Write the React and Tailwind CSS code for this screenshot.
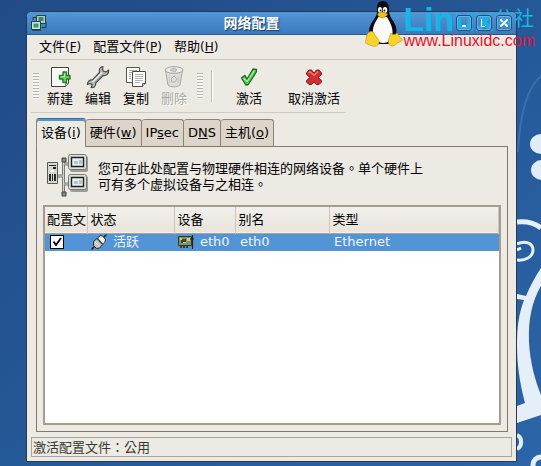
import React, { useState } from 'react';

const menus = [
  { label: '文件', key: 'F' },
  { label: '配置文件', key: 'P' },
  { label: '帮助', key: 'H' },
];

const tabs = [
  { id: 'devices', before: '设备(', key: 'i', after: ')' },
  { id: 'hardware', before: '硬件(', key: 'w', after: ')' },
  { id: 'ipsec', before: 'IP', key: 's', after: 'ec' },
  { id: 'dns', before: 'D', key: 'N', after: 'S' },
  { id: 'hosts', before: '主机(', key: 'o', after: ')' },
];

function NewIcon() {
  return (
    <svg className="w-6 h-6" viewBox="0 0 24 24">
      <path d="M3.500 2.500h17v16l-3 3h-14z" fill="#fff" stroke="#41423e" />
      <path d="M5 4h14v14H5z" fill="#f7f8f4" />
      <path d="M20.500 18.500h-3v3z" fill="#d7d8d2" stroke="#555" strokeWidth=".7" />
      <path d="M15 7h3.500v3.500H22V14h-3.500v3.500H15V14h-3.500v-3.500H15z" fill="#70cf69" stroke="#257d26" strokeLinejoin="round" strokeWidth="1.400" />
      <path d="M16.500 8.500v3H13" fill="none" stroke="#b3efaa" strokeWidth="1" />
    </svg>
  );
}

function WrenchIcon() {
  return (
    <svg className="w-6 h-6" viewBox="0 0 24 24">
      <path d="M17 1.500c-3 .5-4.300 3-3.500 6L6.500 15C4 14.500 1.300 16.500 1.500 19.500l3-1 1.800 1.500-1.300 2.500c3 .5 5-1.500 4.700-4.500l7.500-7.500c3 .5 5.800-1.700 5.500-5.500l-3 2-2.500-1-.7-2z" fill="#b7b9b5" stroke="#484a46" strokeLinejoin="round" strokeWidth="1.200" />
      <path d="M6.500 17L16 7.500" stroke="#f0f0ee" strokeWidth="1.500" />
      <path d="M8.500 18l8.500-8.500" stroke="#868984" />
    </svg>
  );
}

function CopyIcon() {
  return (
    <svg className="w-6 h-6" viewBox="0 0 24 24">
      <path d="M2.500 2.500h13v15h-13z" fill="#fdfdfc" stroke="#55574f" />
      <path d="M5 5.500h8M5 7.500h3M5 9.500h2M5 11.500h2M5 13.500h2" stroke="#a9aba6" />
      <path d="M8.500 6.500h13v12l-3 3h-10z" fill="#fff" stroke="#484a44" />
      <path d="M11 9.500h8M11 11.500h8M11 13.500h8M11 15.500h8M11 17.500h5" stroke="#b3b5b0" />
      <path d="M21.500 18.500h-3v3" fill="#ddd" stroke="#55574f" />
    </svg>
  );
}

function TrashIcon() {
  return (
    <svg className="w-6 h-6" viewBox="0 0 24 24">
      <path d="M3.500 5l2.500 15c2 2.500 10 2.500 12 0l2.500-15z" fill="#dedcd7" stroke="#aaa8a4" />
      <ellipse cx="12" cy="5" rx="9" ry="3.300" fill="#eeece8" stroke="#a5a39f" />
      <path d="M8 5l4-2 3 2-2 2z" fill="#d0ceca" stroke="#b6b4b0" />
      <path d="M9 14l3-3 3 3-2 3h-3z" fill="none" stroke="#b3b1ad" />
      <path d="M7 11l1 7M17 11l-1 7" stroke="#cbc9c5" />
    </svg>
  );
}

function CheckIcon() {
  return (
    <svg className="w-6 h-6" viewBox="0 0 24 24">
      <path d="M4.500 13l3.200-2.500 2.500 3.500L16 4l3.500.5-.2 2.500-8 12.500-2.500.5z" fill="#55c853" stroke="#1f6a1e" strokeLinejoin="round" strokeWidth="1.300" />
      <path d="M6.500 13l3.500 3.500L17.500 5.500" fill="none" stroke="#a6ee9f" strokeWidth="1.300" />
    </svg>
  );
}

function CrossIcon() {
  return (
    <svg className="w-6 h-6" viewBox="0 0 24 24">
      <path d="M4.500 8L7 5h2.500l2.500 3L14.500 5H17l2.500 3v1.500L16 12.500l3.500 3V17L17 19.500h-2.500L12 17l-2.500 2.500H7L4.500 17v-1.500l3.500-3-3.500-3z" fill="#cf3031" stroke="#761818" strokeLinejoin="round" />
      <path d="M6.500 8L8 6.500l4 4 4-4" fill="none" stroke="#ec8582" strokeWidth="1.100" />
    </svg>
  );
}

function WindowIcon() {
  return (
    <svg className="w-4 h-4 shrink-0" viewBox="0 0 16 16">
      <path d="M11 12.500h4V7M2 5V2.500h3" fill="none" stroke="#193b42" />
      <path d="M5.500.5h9v8h-9z" fill="#b9c8bf" stroke="#273f43" />
      <path d="M7.500 2h5v4h-5z" fill="#29907b" />
      <path d="M.5 6.500h9v8h-9z" fill="#d6ded5" stroke="#273f43" />
      <path d="M2.500 8.500h5v4h-5z" fill="#2f9d7c" />
      <path d="M1 15.500h9" stroke="#304b4c" />
    </svg>
  );
}

function NetworkIcon() {
  return (
    <svg className="w-[46px] h-[46px] shrink-0" viewBox="0 0 46 46">
      <path d="M16.500 7v33M11 23h6M17 11h6M17 31h6" fill="none" stroke="#777a75" strokeWidth="3" />
      <path d="M16.500 7v33M11 23h6M17 11h6M17 31h6" fill="none" stroke="#d3d5d0" strokeWidth="1" />
      <path d="M15 5h4v4h-4zM15 39h4v4h-4z" fill="#8b8e88" stroke="#3e403c" />
      <path d="M.5 9.500h10v21H.5z" fill="#d4d6d0" stroke="#585a56" />
      <path d="M2 12h7v1H2zM6 14h3v2H6z" fill="#222" />
      <path d="M3 17h4v2H3z" fill="#fff" />
      <path d="M2 21h2v7H2zM5 21h1v7H5zM7 21h2v7H7z" fill="#292a28" />
      <rect x="23" y="3" width="18" height="16" rx="2" fill="#9a9d98" />
      <rect x="21.500" y="1.500" width="18" height="15" rx="2" fill="#deded9" stroke="#777a75" />
      <path d="M24.500 4.500h12v9h-12z" fill="#e9eef0" stroke="#1e2022" strokeWidth="1.400" />
      <path d="M27 8h4v3h-4zM32 7h3v4h-3z" fill="#b4c3ce" />
      <rect x="23" y="23" width="18" height="16" rx="2" fill="#9a9d98" />
      <rect x="21.500" y="21.500" width="18" height="15" rx="2" fill="#deded9" stroke="#777a75" />
      <path d="M24.500 24.500h12v9h-12z" fill="#e9eef0" stroke="#1e2022" strokeWidth="1.400" />
      <path d="M27 28h4v3h-4zM32 27h3v4h-3z" fill="#b4c3ce" />
    </svg>
  );
}

function PlugIcon() {
  return (
    <svg className="w-4 h-4 shrink-0" viewBox="0 0 16 16">
      <path d="M.5 15.500L5 11M11 5l4.500-4.500" stroke="#222" strokeWidth="1.500" />
      <path d="M2.500 7.500L6 4.500l5.500 6-3 3.500-3 .5-3-3z" fill="#bfc1bc" stroke="#2c2d2b" />
      <path d="M6.500 4l3-2.500 2 .5 3 3.500-.5 2-2.500 2.500z" fill="#eeeeeb" stroke="#2c2d2b" />
      <path d="M4 8l4.500 4.500M8.500 4l4 4.500" stroke="#fff" />
    </svg>
  );
}

function CardIcon() {
  return (
    <svg className="w-4 h-4 shrink-0" viewBox="0 0 16 16">
      <path d="M.5 2.500h13v9H.5z" fill="#7f9462" stroke="#2e3a22" />
      <path d="M3 5h5v4H3z" fill="#364829" />
      <path d="M2 4h2v2H2zM9 4h3v3H9zM5 8h3v1H5z" fill="#c7cf9d" />
      <path d="M2 13h9" stroke="#333b25" strokeWidth="2" strokeDasharray="2 1" />
      <path d="M14.500 1v14M12 5h4" stroke="#20241d" strokeWidth="1.200" />
    </svg>
  );
}

function Tux() {
  return (
    <svg className="w-[38px] h-[46px] shrink-0" viewBox="0 0 38 46">
      <path d="M18 0c-4.500 0-6.500 3.500-6 8 .4 5-.8 7-3.500 11-3.500 4.500-5.500 10-4 16L12 43h13l6-9c1.500-6-.5-11-3.500-15-3-4.500-3.500-7-3.500-11 0-5-2-8-6-8z" fill="#0b0b0d" />
      <path d="M13.500 16c-2.500 4-6 9-5.500 15 1 7 5 11 10 11 6 0 10-4 9.500-12-.5-6-3.500-10-5.500-14z" fill="#fafafa" />
      <ellipse cx="15" cy="9" rx="2" ry="3" fill="#fff" />
      <ellipse cx="20" cy="9" rx="2.300" ry="3" fill="#fff" />
      <circle cx="15.500" cy="9.500" r=".9" fill="#111" />
      <circle cx="19.500" cy="9.500" r="1" fill="#111" />
      <path d="M12.500 13c3-3 6-2 10 0 0 2-4 4-5.500 4s-4.500-2-4.500-4z" fill="#f5bd19" stroke="#b77d08" strokeWidth=".6" />
      <path d="M4.500 31c2-2 4 0 5.500 3 2 3 5 5 4 8-1 3.500-5 4-8 2.500-2-1-5-1.500-5.500-3s1-3 1-5 .5-4 3-5.500z" fill="#fcd228" stroke="#b98e12" strokeWidth=".6" />
      <path d="M26 32c1.500 2 4 2 6 0 1.500 1 1.500 4 5 6 1 1.500-2 3-4.500 4-3 3-6 4-8 2-2.500-3 0-8 1.500-12z" fill="#fcd228" stroke="#b98e12" strokeWidth=".6" />
    </svg>
  );
}

// Floral swirls of the desktop background
function Wallpaper() {
  return (
    <svg className="absolute right-0 top-0 w-6 h-[466px]" viewBox="0 0 24 466">
      <path d="M1 152C3 110 12 86 24 76" fill="none" stroke="#6099ce" strokeWidth="2" opacity=".35" />
      <ellipse cx="24" cy="144" rx="11" ry="10" fill="#dfedf8" />
      <ellipse cx="25" cy="170" rx="11" ry="10" fill="#dfedf8" />
      <path d="M0 222c10-1 18 1 24 6" fill="none" stroke="#e5f0fa" strokeWidth="5" />
      <path d="M0 244c8-4 16-1 16 6 0 7-8 11-16 10M0 250l4-2" fill="none" stroke="#e5f0fa" strokeWidth="3" />
      <path d="M0 294l9 2C13 286 18 277 24 268v18c-9 15-13 34-12 56 1 20 6 38 12 53v20l-24 8v-17l8-3C2 380 0 362 0 345c0-18 2-32 7-45l-7-1z" fill="#e5effa" />
      <path d="M0 435c5 2 6 11 0 14" fill="none" stroke="#e2edf7" strokeWidth="4" />
      <circle cx="24" cy="465" r="8" fill="none" stroke="#e5effa" strokeWidth="5" />
    </svg>
  );
}

function ToolButton({ icon, label, disabled }) {
  return (
    <button disabled={disabled} className="flex flex-col items-center gap-[2px] px-[6px] text-[13px] leading-[16px] text-black disabled:text-[#aaa7a1] disabled:[text-shadow:1px_1px_0_#fff]">
      {icon}
      <span>{label}</span>
    </button>
  );
}

function Grip() {
  return <div className="w-[6px] h-[26px] shrink-0 bg-[repeating-linear-gradient(to_bottom,#b8b3a9_0_1px,#f8f7f4_1px_3px)]" />;
}

function TitleBar() {
  const control = 'flex items-center justify-center w-4 h-4 rounded-[3px] border border-[#244f80] text-white shadow-[inset_0_0_0_1px_#75abdf]';
  return (
    <header className="flex items-center justify-between h-[23px] px-1 rounded-t-[5px] border-b border-[#2b5686] bg-linear-to-b from-[#5396d8] to-[#397abb]">
      <WindowIcon />
      <h1 className="text-[14px] leading-[18px] font-bold text-white [text-shadow:1px_1px_1px_#173a62]">网络配置</h1>
      <div className="relative z-10 flex gap-1">
        <button aria-label="最小化" className={control}>
          <svg className="w-2 h-2" viewBox="0 0 8 8"><path d="M2 7h4" stroke="currentColor" strokeWidth="2" /></svg>
        </button>
        <button aria-label="最大化" className={control}>
          <svg className="w-2 h-2" viewBox="0 0 8 8"><path d="M1.500 0v7.500H5" fill="none" stroke="currentColor" /></svg>
        </button>
        <button aria-label="关闭" className={control}>
          <svg className="w-2 h-2" viewBox="0 0 8 8"><path d="M0 0l3 3M5 5l3 3M8 0L0 8" stroke="currentColor" strokeWidth="2" /></svg>
        </button>
      </div>
    </header>
  );
}

function Toolbar() {
  return (
    <div className="flex items-center self-start ml-1 h-[53px] pl-[2px] border-b border-[#d0cbc1]">
      <Grip />
      <div className="flex ml-[2px]">
        <ToolButton icon={<NewIcon />} label="新建" />
        <ToolButton icon={<WrenchIcon />} label="编辑" />
        <ToolButton icon={<CopyIcon />} label="复制" />
        <ToolButton icon={<TrashIcon />} label="删除" disabled />
      </div>
      <div className="flex items-center ml-1">
        <Grip />
        <div className="w-px h-8 ml-2 bg-[#c1bcb2] shadow-[1px_0_0_#fff]" />
      </div>
      <div className="flex gap-[14px] ml-[18px]">
        <ToolButton icon={<CheckIcon />} label="激活" />
        <ToolButton icon={<CrossIcon />} label="取消激活" />
      </div>
    </div>
  );
}

function DeviceTable({ enabled, onToggle }) {
  const head = 'border-r border-[#cbc6bc] font-normal text-left whitespace-nowrap overflow-hidden';
  return (
    <div className="flex-1 bg-white border-2 border-[#a49d8f]">
      <table className="w-full table-fixed border-collapse text-[13px] leading-[16px]">
        <colgroup>
          <col className="w-[42px]" />
          <col className="w-[87px]" />
          <col className="w-[61px]" />
          <col className="w-[94px]" />
          <col />
        </colgroup>
        <thead>
          <tr className="h-[26px] bg-linear-to-b from-[#f2f0eb] to-[#e8e4dc] border-b border-[#aaa497]">
            <th className={`${head} pl-[2px]`}>配置文</th>
            <th className={`${head} pl-[3px]`}>状态</th>
            <th className={`${head} pl-[3px]`}>设备</th>
            <th className={`${head} pl-[3px]`}>别名</th>
            <th className={`${head} pl-[3px]`}>类型</th>
          </tr>
        </thead>
        <tbody>
          <tr className="h-[18px] bg-[#5294d6] text-[#f0f6fc]">
            <td className="pl-[5px]">
              <label className="relative block w-[14px] h-[14px]">
                <input
                  type="checkbox"
                  aria-label="配置文件"
                  checked={enabled}
                  onChange={onToggle}
                  className="block appearance-none w-[14px] h-[14px] bg-white border border-black"
                />
                {enabled && (
                  <svg className="absolute inset-0 w-[14px] h-[14px] pointer-events-none" viewBox="0 0 14 14">
                    <path d="M3.500 6.500L6 10l5-7" fill="none" stroke="#000" strokeWidth="1.800" />
                  </svg>
                )}
              </label>
            </td>
            <td className="pl-1"><div className="flex items-center gap-[6px]"><PlugIcon />活跃</div></td>
            <td className="pl-1"><div className="flex items-center gap-[6px]"><CardIcon />eth0</div></td>
            <td className="pl-[5px]">eth0</td>
            <td className="pl-[5px]">Ethernet</td>
          </tr>
        </tbody>
      </table>
    </div>
  );
}

export default function App() {
  const [activeTab, setActiveTab] = useState('devices');
  const [enabled, setEnabled] = useState(true);

  return (
    <div className="relative flex min-h-screen pt-[11px] pr-6 pb-1 pl-[26px] overflow-hidden bg-linear-to-br from-[#204b86] to-[#2b65a8] text-black font-['DejaVu_Sans','Noto_Sans_CJK_SC',sans-serif]">
      <Wallpaper />

      <main className="relative flex flex-col flex-1 min-w-0 rounded-t-md border border-[#263b52] bg-[#edeae4]">
        <TitleBar />

        <nav className="flex items-center gap-3 mx-1 h-[25px] px-2 border-b border-[#cbc3b7] text-[13px] leading-[16px]">
          {menus.map((m) => (
            <button key={m.key}>{m.label}<span className="text-[12px]">(<u>{m.key}</u>)</span></button>
          ))}
        </nav>

        <Toolbar />

        <div className="flex flex-col flex-1 ml-[9px] mr-2 mt-[5px]">
          <div role="tablist" className="flex items-end">
            {tabs.map((tab) => (
              <button
                key={tab.id}
                role="tab"
                aria-selected={activeTab === tab.id}
                onClick={() => setActiveTab(tab.id)}
                className={`px-1 rounded-t-[3px] border border-[#8b8377] text-[13px] whitespace-nowrap ${activeTab === tab.id ? 'relative -mb-px h-[29px] border-t-[#376b9c] border-b-0 bg-[#edeae4] shadow-[inset_0_2px_0_#5294d6]' : 'h-[27px] border-l-0 border-b-0 bg-[#ded5ca]'}`}
              >
                {tab.before}<u>{tab.key}</u>{tab.after}
              </button>
            ))}
          </div>

          <section className="flex flex-col flex-1 border border-[#807a6b] px-[6px] pb-[6px]">
            <div className="flex items-center gap-[5px] h-[58px] pl-1">
              <NetworkIcon />
              <p className="max-w-[330px] text-[13px] leading-[16px] font-['Noto_Sans_CJK_TC',sans-serif]">您可在此处配置与物理硬件相连的网络设备。单个硬件上可有多个虚拟设备与之相连。</p>
            </div>
            <DeviceTable enabled={enabled} onToggle={() => setEnabled(!enabled)} />
          </section>
        </div>

        <footer className="m-1 mt-[5px] h-5 px-px border border-[#aaa79a] text-[13px] leading-[18px] text-[#3b3934] font-['Noto_Sans_CJK_TC',sans-serif]">激活配置文件：公用</footer>
      </main>

      {/* Site badge over the title bar */}
      <div className="absolute top-0 right-[6px] flex items-start pt-px">
        <Tux />
        <div className="flex flex-col whitespace-nowrap font-['Liberation_Sans','Noto_Sans_CJK_SC',sans-serif]">
          <div className="flex items-center mt-[5px] h-[26px] text-[#16b5e8]">
            <span className="text-[34px] leading-[26px] font-bold">Linux</span>
            <span className="text-[20px] leading-[26px]">公社</span>
          </div>
          <a href="#linuxidc" className="mt-[2px] text-[16px] leading-[14px] text-[#e8112d]">www.Linuxidc.com</a>
        </div>
      </div>
    </div>
  );
}
